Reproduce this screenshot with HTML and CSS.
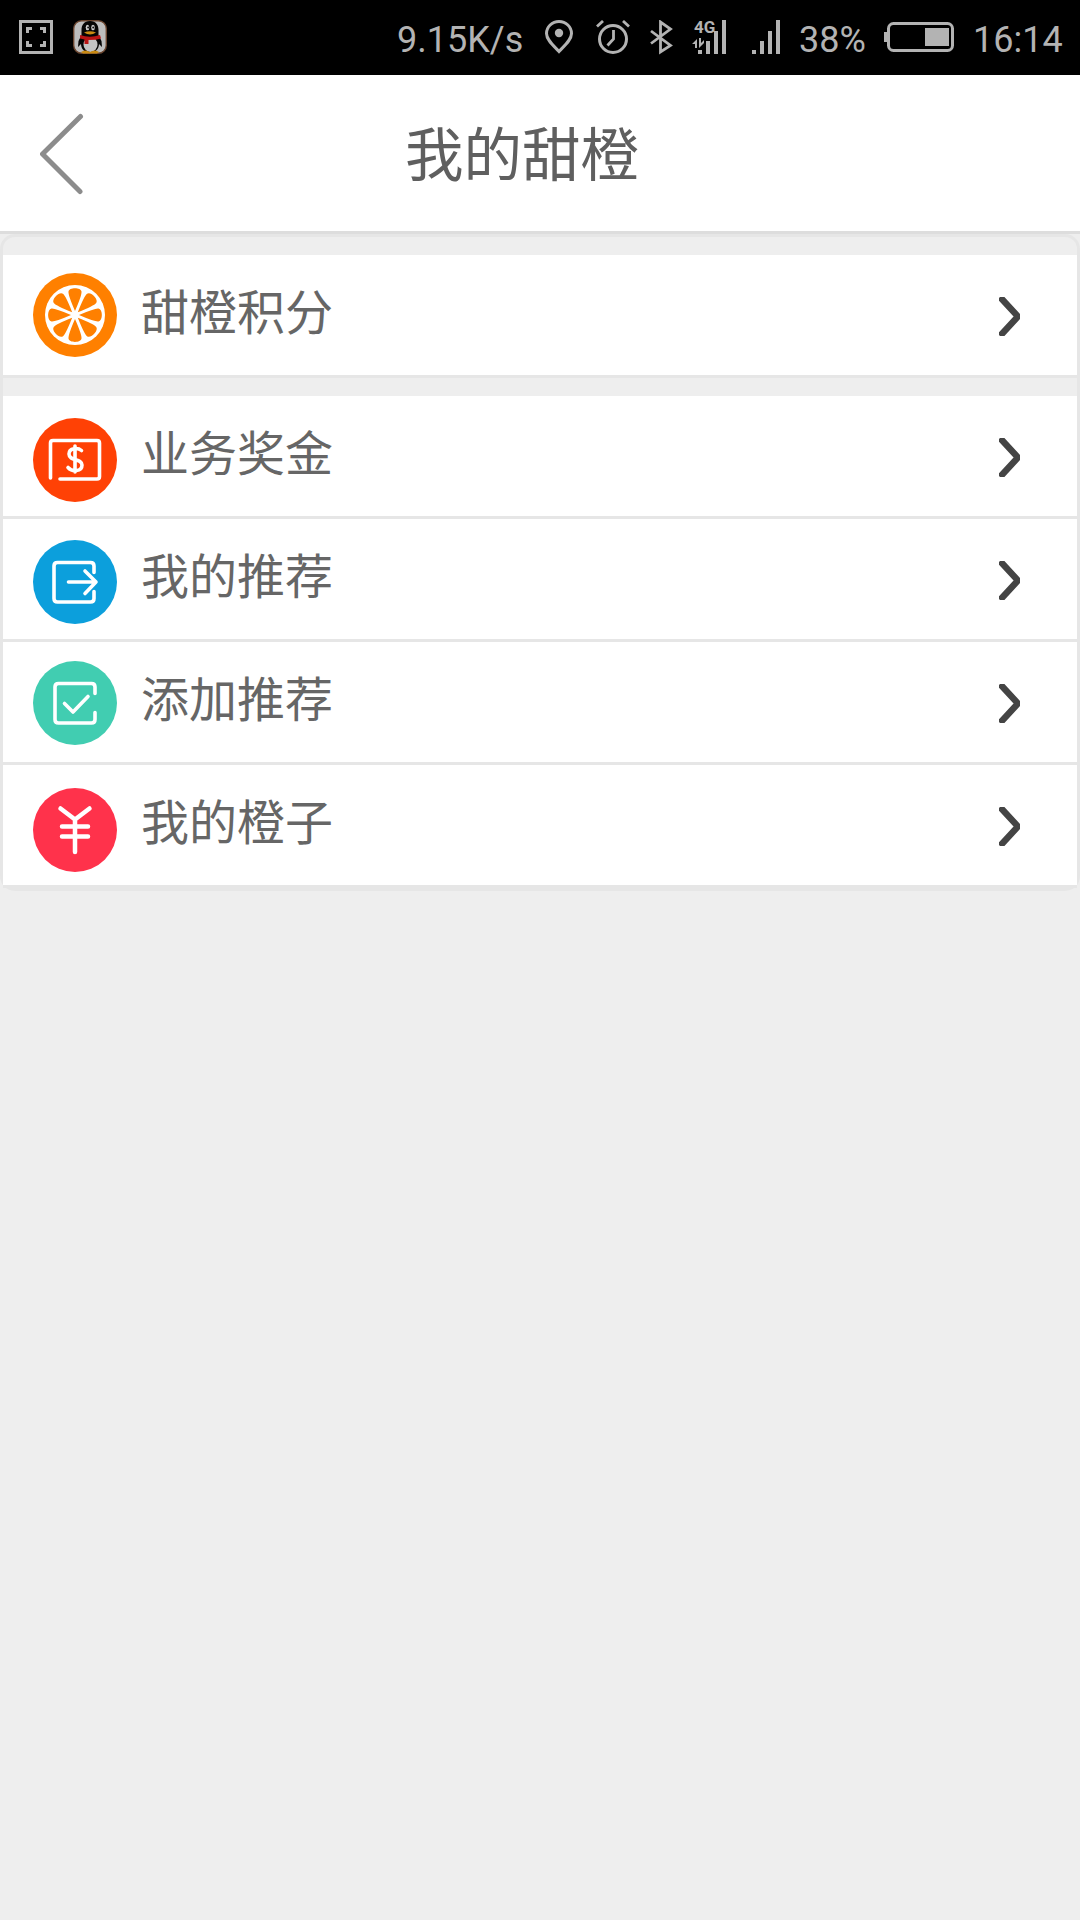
FILE: index.html
```html
<!DOCTYPE html>
<html lang="zh-CN">
<head>
<meta charset="UTF-8">
<title>我的甜橙</title>
<meta name="viewport" content="width=device-width, initial-scale=1.0">
<link rel="stylesheet" href="styles.css">
</head>
<body>

<div class="status-bar">
  <svg class="status-shot" width="34" height="35" viewBox="0 0 34 35">
    <rect x="1.5" y="1.5" width="31" height="31" fill="none" stroke="#b3b3b3" stroke-width="3"/>
    <path d="M7 7h6v3h-3v3H7zM27 7h-6v3h3v3h3zM7 27h6v-3h-3v-3H7zM27 27h-6v-3h3v-3h3z" fill="#b3b3b3"/>
  </svg>
  <svg class="status-qq" width="34" height="35" viewBox="0 0 34 35">
    <rect x=".7" y=".7" width="32.600" height="32.600" rx="8" fill="#bdbdbd" stroke="#6b4630" stroke-width="1.400"/>
    <path d="M17 1c-6 0-8.500 4-8.500 9v5L5.500 21 5 27l3-3c0 5 4 8.500 9 8.500s9-3.500 9-8.500l3 3-.5-6-3-6v-5c0-5-2.500-9-8.500-9z" fill="#050505"/>
    <ellipse cx="17.500" cy="24.500" rx="7" ry="7.500" fill="#c4c4c4"/>
    <ellipse cx="14.500" cy="7.500" rx="1.800" ry="2.800" fill="#ccc"/>
    <ellipse cx="20" cy="7.500" rx="1.800" ry="2.800" fill="#ccc"/>
    <circle cx="15.200" cy="7.500" r="1" fill="#111"/>
    <circle cx="20.200" cy="7.500" r="1" fill="#111"/>
    <path d="M11 12.500q6-2.500 12 0-6 4-12 0z" fill="#c98a12"/>
    <path d="M7 15q10 3.500 20 0l1 3.500q-5 1.500-12.500 1.500v4h-4v-4.500L7 18.500z" fill="#b81414"/>
    <path d="M8 32q4-3 9 0 5-3 9 0l-2 1.500H10z" fill="#c98a12"/>
  </svg>
  <div class="status-right">
    <span class="speed">9.15K/s</span>
    <svg class="pin" width="30" height="35" viewBox="0 0 30 35">
      <path d="M15 31.500C10 26 2.500 20 2.500 13.500a12.500 12 0 0 1 25 0C27.500 20 20 26 15 31.500z" fill="none" stroke="#b3b3b3" stroke-width="3"/>
      <circle cx="15" cy="13" r="4.200" fill="#b3b3b3"/>
    </svg>
    <svg class="alarm" width="34" height="35" viewBox="0 0 34 35">
      <circle cx="17" cy="19" r="13.500" fill="none" stroke="#b3b3b3" stroke-width="3"/>
      <path d="M17.500 10v9l-6 6.500M1 6.500l6-5.500M33 6.500L27 1" fill="none" stroke="#b3b3b3" stroke-width="2.800"/>
    </svg>
    <svg class="bluetooth" width="24" height="35" viewBox="0 0 24 35">
      <path d="M1 11l19.500 14.500L10.500 32V2l10 7L1 23.500" fill="none" stroke="#b3b3b3" stroke-width="2.800"/>
    </svg>
    <svg class="mobile" width="34" height="35" viewBox="0 0 34 35">
      <path d="M30 0h4v34h-4zM22 11h4v23h-4zM14 21h4v13h-4zM6 30h4v4H6zM0 24l5-5v9H3v-4zM7 18h2v5l3-3v3l-5 5z" fill="#b3b3b3"/>
      <text class="net-type" x="2" y="12.800">4G</text>
    </svg>
    <svg class="signal" width="28" height="35" viewBox="0 0 28 35">
      <path d="M24 0h4v34h-4zM16 11h4v23h-4zM8 21h4v13H8zM0 30h4v4H0z" fill="#b3b3b3"/>
    </svg>
    <span class="percent">38%</span>
    <svg class="battery" width="70" height="35" viewBox="0 0 70 35">
      <rect x="4.500" y="3.500" width="64" height="27" rx="5" fill="none" stroke="#b3b3b3" stroke-width="3"/>
      <path d="M0 12h4v10H0zM41 8h24v18H41z" fill="#b3b3b3"/>
    </svg>
    <span class="clock">16:14</span>
  </div>
</div>

<div class="header">
  <a class="back" href="#">
    <svg width="44" height="82" viewBox="0 0 44 82">
      <path d="M40.500 3.500L2.500 41l37.500 37.500" fill="none" stroke="#8c8c8c" stroke-width="5" stroke-linecap="round" stroke-linejoin="round"/>
    </svg>
  </a>
  <h1>我的甜橙</h1>
</div>

<div class="list">
  <div class="row">
    <svg class="icon icon-points" viewBox="0 0 84 84">
      <circle cx="42" cy="42" r="42" fill="#ff8000"/>
      <circle cx="42" cy="42" r="30" fill="#fff"/>
      <defs>
        <path id="slice" d="M42 38Q35 22 35.500 18.500C36 14 48 14 48.500 18.500Q49 22 42 38z"/>
      </defs>
      <g fill="#ff8000">
        <use href="#slice"/>
        <use href="#slice" transform="rotate(45 42 42)"/>
        <use href="#slice" transform="rotate(90 42 42)"/>
        <use href="#slice" transform="rotate(135 42 42)"/>
        <use href="#slice" transform="rotate(180 42 42)"/>
        <use href="#slice" transform="rotate(225 42 42)"/>
        <use href="#slice" transform="rotate(270 42 42)"/>
        <use href="#slice" transform="rotate(315 42 42)"/>
      </g>
    </svg>
    <span class="label">甜橙积分</span>
    <svg class="arrow" viewBox="0 0 21 39"><path d="M1 0l18 19.500L1 39" /></svg>
  </div>
  <div class="space"></div>
  <div class="row">
    <svg class="icon icon-bonus" viewBox="0 0 84 84">
      <circle cx="42" cy="42" r="42" fill="#ff4105"/>
      <path d="M17.500 60V25q0-2.500 2.500-2.500h44q2.500 0 2.500 2.500v33.500q0 2.500-2.500 2.500H27"/>
      <path d="M48.500 32.500C45 29.500 36 29.500 36 36c0 7.500 13 4 13 11 0 7-10 7-14 2.500M42 28v26"/>
    </svg>
    <span class="label">业务奖金</span>
    <svg class="arrow" viewBox="0 0 21 39"><path d="M1 0l18 19.500L1 39" /></svg>
  </div>
  <div class="row">
    <svg class="icon icon-mine" viewBox="0 0 84 84">
      <circle cx="42" cy="42" r="42" fill="#0c9fdc"/>
      <path d="M61 32.500V26q0-3.500-3.500-3.500h-33Q21 22.500 21 26v32.500q0 3.500 3.500 3.500h33q3.500 0 3.500-3.500v-7M35.500 42H63M52 31l11 11-11 11.500"/>
    </svg>
    <span class="label">我的推荐</span>
    <svg class="arrow" viewBox="0 0 21 39"><path d="M1 0l18 19.500L1 39" /></svg>
  </div>
  <div class="row">
    <svg class="icon icon-add" viewBox="0 0 84 84">
      <circle cx="42" cy="42" r="42" fill="#41cdb1"/>
      <path d="M62 32.500V26q0-3.500-3.500-3.500h-33Q22 22.500 22 26v32.500q0 3.500 3.500 3.500h33q3.500 0 3.500-3.500v-7M31.500 42.500L40 51l15-15.500"/>
    </svg>
    <span class="label">添加推荐</span>
    <svg class="arrow" viewBox="0 0 21 39"><path d="M1 0l18 19.500L1 39" /></svg>
  </div>
  <div class="row">
    <svg class="icon icon-orange" viewBox="0 0 84 84">
      <circle cx="42" cy="42" r="42" fill="#ff324b"/>
      <path class="thick" d="M27.500 20.500L42 31.500l14.500-11M42 31.500V64M29 38.500h26M29 48.500h26"/>
    </svg>
    <span class="label">我的橙子</span>
    <svg class="arrow" viewBox="0 0 21 39"><path d="M1 0l18 19.500L1 39" /></svg>
  </div>
</div>

</body>
</html>
```

FILE: styles.css
```css
* {
  box-sizing: border-box;
}

body {
  margin: 0;
  min-height: 1920px;
  background-color: #eee;
  font-family: Roboto, "Noto Sans CJK SC", sans-serif;
}

svg {
  display: block;
  flex: none;
}

/* 状态栏 */
.status-bar {
  display: flex;
  align-items: flex-start;
  height: 75px;
  padding: 20px 0 0 19px;
  background-color: #000;
  color: #b3b3b3;
  font-size: 36px;
  line-height: 40px;
}
.status-qq {
  margin-left: 20px;
}
.status-right {
  display: flex;
  margin-left: auto;
}
.speed {
  width: 147px;
}
.alarm {
  margin-left: 22px;
}
.bluetooth {
  margin-left: 20px;
}
.mobile {
  margin-left: 18px;
  overflow: visible;
}
.net-type {
  fill: #b3b3b3;
  font-size: 17px;
  font-weight: bold;
}
.signal {
  margin-left: 26px;
}
.percent {
  width: 85px;
  margin-left: 19px;
}
.clock {
  width: 107px;
  margin-left: 19px;
}

/* 标题栏 */
.header {
  display: flex;
  height: 159px;
  background-color: #fff;
  border-bottom: 3px solid #ddd;
}
.back {
  padding: 38px 0 0 40px;
}
.header h1 {
  margin: 2px 0 0 321px;
  color: #5f5f5f;
  font-size: 58.5px;
  font-weight: normal;
  line-height: 158px;
}

/* 列表 */
.list {
  padding-top: 18px;
  border: 3px solid #e6e6e6;
  border-radius: 15px;
}
.space {
  height: 18px;
}
.row {
  display: flex;
  height: 123px;
  padding-left: 30px;
  background-color: #fff;
  border-bottom: 3px solid #e6e6e6;
}
.icon {
  width: 84px;
  height: 84px;
}
.icon path {
  stroke-linecap: round;
  stroke-linejoin: round;
}
.icon-bonus path,
.icon-mine path,
.icon-add path,
.icon-orange path {
  fill: none;
  stroke: #fff;
  stroke-width: 3.6;
}
.icon-orange .thick {
  stroke-width: 4.5;
}
.icon-points {
  margin-top: 18px;
}
.icon-bonus {
  margin-top: 22px;
}
.icon-mine {
  margin-top: 21px;
}
.icon-add {
  margin-top: 19px;
}
.icon-orange {
  margin-top: 23px;
}
.label {
  margin-left: 24px;
  color: #666;
  font-size: 48px;
  line-height: 117px;
}
.arrow {
  width: 21px;
  height: 39px;
  margin: 42px 57px 0 auto;
}
.arrow path {
  fill: none;
  stroke: #444;
  stroke-width: 6.5;
}
```
